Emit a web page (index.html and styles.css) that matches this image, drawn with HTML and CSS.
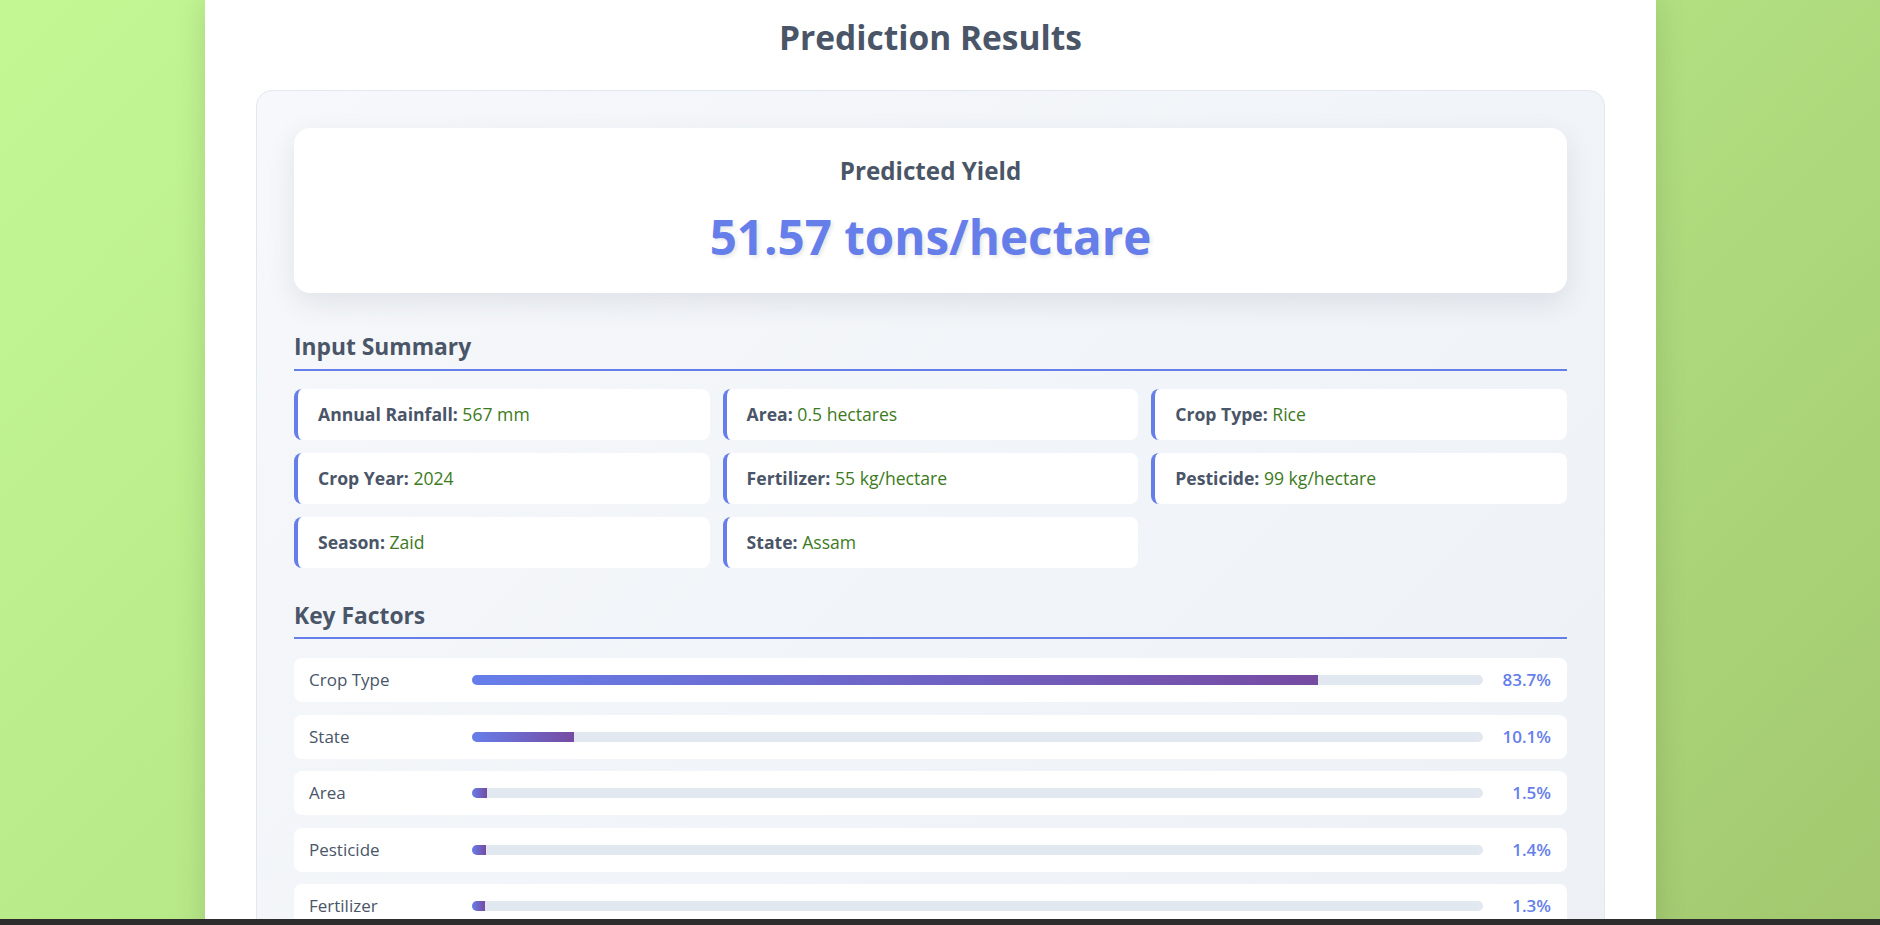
FILE: index.html
```html
<!DOCTYPE html>
<html lang="en">
<head>
<meta charset="utf-8">
<title>Prediction Results</title>
<link rel="stylesheet" href="styles.css">
</head>
<body>
<main class="page">
  <h1 class="page-title">Prediction Results</h1>
  <section class="results">
    <div class="yield-card">
      <h2 class="yield-label">Predicted Yield</h2>
      <div class="yield-value">51.57 tons/hectare</div>
    </div>

    <h3 class="section-title section-title--first">Input Summary</h3>
    <div class="summary-grid">
      <div class="summary-item"><span class="summary-key">Annual Rainfall:</span> <span class="summary-val">567 mm</span></div>
      <div class="summary-item"><span class="summary-key">Area:</span> <span class="summary-val">0.5 hectares</span></div>
      <div class="summary-item"><span class="summary-key">Crop Type:</span> <span class="summary-val">Rice</span></div>
      <div class="summary-item"><span class="summary-key">Crop Year:</span> <span class="summary-val">2024</span></div>
      <div class="summary-item"><span class="summary-key">Fertilizer:</span> <span class="summary-val">55 kg/hectare</span></div>
      <div class="summary-item"><span class="summary-key">Pesticide:</span> <span class="summary-val">99 kg/hectare</span></div>
      <div class="summary-item"><span class="summary-key">Season:</span> <span class="summary-val">Zaid</span></div>
      <div class="summary-item"><span class="summary-key">State:</span> <span class="summary-val">Assam</span></div>
    </div>

    <h3 class="section-title section-title--second">Key Factors</h3>
    <div class="factor-list">
      <div class="factor-row">
        <span class="factor-name">Crop Type</span>
        <div class="factor-track"><div class="factor-fill" style="width:83.7%"></div></div>
        <span class="factor-pct">83.7%</span>
      </div>
      <div class="factor-row">
        <span class="factor-name">State</span>
        <div class="factor-track"><div class="factor-fill" style="width:10.1%"></div></div>
        <span class="factor-pct">10.1%</span>
      </div>
      <div class="factor-row">
        <span class="factor-name">Area</span>
        <div class="factor-track"><div class="factor-fill" style="width:1.5%"></div></div>
        <span class="factor-pct">1.5%</span>
      </div>
      <div class="factor-row">
        <span class="factor-name">Pesticide</span>
        <div class="factor-track"><div class="factor-fill" style="width:1.4%"></div></div>
        <span class="factor-pct">1.4%</span>
      </div>
      <div class="factor-row">
        <span class="factor-name">Fertilizer</span>
        <div class="factor-track"><div class="factor-fill" style="width:1.3%"></div></div>
        <span class="factor-pct">1.3%</span>
      </div>
    </div>
  </section>
</main>
<div class="frame-bottom"></div>
</body>
</html>
```
FILE: styles.css
```css
html {
  overflow: hidden;
  height: 100%;
}

body {
  margin: 0;
  min-height: 100%;
  padding-right: 19px;
  font-family: "Open Sans", "Noto Sans", sans-serif;
  color: #4a5568;
  background: linear-gradient(135deg, #c3f794 0%, #b5e585 50%, #a3c86f 100%);
  background-attachment: fixed;
}

.page {
  width: 1451px;
  margin: 0 auto;
  min-height: 1100px;
  box-sizing: border-box;
  padding: 17px 51px 40px;
  background: #ffffff;
  box-shadow: 0 0 30px rgba(0, 0, 0, 0.13);
}

.page-title {
  margin: 0 0 33px;
  text-align: center;
  font-size: 33.5px;
  line-height: 40px;
  font-weight: 700;
  color: #4a5568;
}

.results {
  border: 1px solid #e2e8f0;
  border-radius: 16px;
  padding: 37px;
  background: linear-gradient(135deg, #f6f8fb 0%, #edf1f6 100%);
}

.yield-card {
  background: #ffffff;
  border-radius: 16px;
  padding: 28px 20px;
  text-align: center;
  box-shadow: 0 10px 28px rgba(40, 50, 70, 0.10);
}

.yield-label {
  margin: 0 0 22px;
  font-size: 24.2px;
  line-height: 30px;
  font-weight: 700;
  color: #4a5568;
}

.yield-value {
  font-size: 47.5px;
  line-height: 57px;
  font-weight: 700;
  color: #667eea;
  text-shadow: 2px 2px 4px rgba(0, 0, 0, 0.1);
}

.section-title {
  margin: 0 0 18.5px;
  padding-bottom: 7.5px;
  border-bottom: 2px solid #667eea;
  font-size: 22.8px;
  line-height: 28px;
  font-weight: 700;
  color: #4a5568;
}

.section-title--first {
  margin-top: 40px;
}

.section-title--second {
  margin-top: 34.4px;
  margin-bottom: 19px;
}

.summary-grid {
  display: grid;
  grid-template-columns: repeat(3, 1fr);
  gap: 12.8px;
}

.summary-item {
  background: #ffffff;
  border-left: 4px solid #667eea;
  border-radius: 8px;
  padding: 12px 20px;
  font-size: 17.6px;
  line-height: 27px;
}

.summary-key {
  font-weight: 700;
  color: #4a5568;
}

.summary-val {
  color: #3d7a22;
}

.factor-list {
  display: flex;
  flex-direction: column;
  gap: 12.8px;
}

.factor-row {
  display: flex;
  align-items: center;
  gap: 13px;
  background: #ffffff;
  border-radius: 8px;
  padding: 8px 16px 8px 15px;
  line-height: 27.7px;
}

.factor-name {
  flex: 0 0 150px;
  font-size: 17px;
  font-weight: 500;
  color: #4a5568;
}

.factor-track {
  flex: 1;
  height: 10px;
  border-radius: 5px;
  background: #e2e8f0;
  overflow: hidden;
}

.factor-fill {
  height: 100%;
  background: linear-gradient(90deg, #667eea 0%, #764ba2 100%);
}

.factor-pct {
  flex: 0 0 55px;
  text-align: right;
  font-size: 17px;
  font-weight: 600;
  color: #667eea;
}

.frame-bottom {
  position: fixed;
  left: 0;
  right: 0;
  bottom: 0;
  height: 6px;
  background: #2d2d2d;
}
```
